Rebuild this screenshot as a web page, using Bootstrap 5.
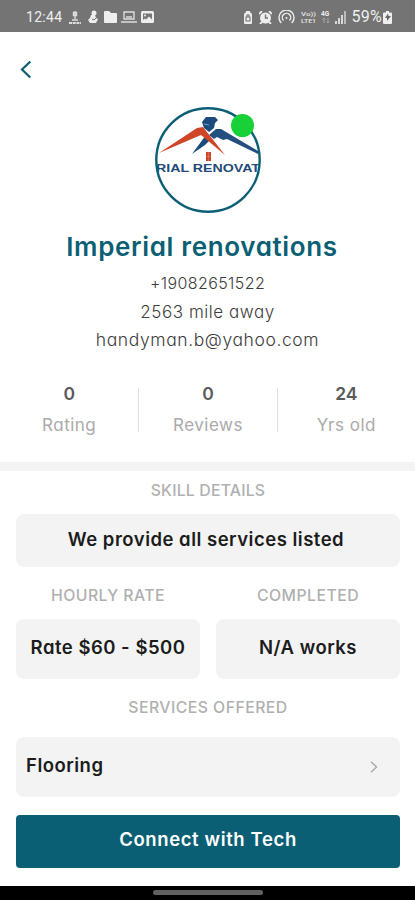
<!DOCTYPE html>
<html lang="en">
<head>
<meta charset="utf-8">
<meta name="viewport" content="width=device-width, initial-scale=1">
<title>Imperial renovations</title>
<link rel="stylesheet" href="https://cdn.jsdelivr.net/npm/bootstrap@5.3.0/dist/css/bootstrap.min.css">
<style>
:root{--teal:#0b5f74}
body{font-family:Inter,"Liberation Sans",sans-serif;font-feature-settings:"cv11","ss03";color:#1c1c1c;background:#fff;overflow:hidden;line-height:1}
.screen{width:415px;height:900px}
.statusbar{height:32px;background:#747474;color:#efefef;padding:2px 23px 0 26px}
.statusbar span{font-family:Roboto,sans-serif;font-size:14px}
.statusbar svg{display:block;flex:none}
.topbar{height:75px;padding:0 20px}
.avatar{width:106px;height:106px}
.online{left:76px;top:7px;width:23px;height:23px;background:#18d038}
.title{height:68px;font-size:26px;font-weight:600;color:var(--teal);padding-right:11px}
.title span{letter-spacing:.65px}
.contact{font-size:16px;font-weight:300;color:#3c3c3c;line-height:28.5px;margin-top:-12px}
.phone{letter-spacing:.4px}
.distance{font-size:17px;letter-spacing:.55px}
.email{font-size:17.5px;letter-spacing:.6px}
.stats{height:44px;margin-top:33px}
.stats>div{width:138.5px}
.stats>div+div{border-left:1px solid #dedede}
.num{font-size:17.5px;font-weight:600;color:#5a5a5a;line-height:12px}
.cap{font-size:17px;letter-spacing:.5px;color:#aaa;line-height:20px;margin-top:15px}
.band{height:9px;background:#f4f4f4;margin-top:30px}
.body-pane{padding:0 15px 0 16px}
.heading{font-size:15.8px;font-weight:500;letter-spacing:.45px;color:#b0b0b0}
.tile{background:#f3f3f3;border-radius:8px;font-size:18.5px;font-weight:600;letter-spacing:.5px}
.btn-connect{height:53px;margin-top:18px;background:var(--teal);color:#fff;font-size:18.5px;font-weight:600;letter-spacing:.62px;border-radius:4px;padding:0 0 2px;border:0}
.navstrip{height:14px;background:#000;padding-top:4px}
.navstrip div{width:110px;height:5px;background:#606060}
</style>
</head>
<body>
<main class="screen d-flex flex-column">
  <div class="statusbar d-flex align-items-center justify-content-between">
    <div class="d-flex align-items-center">
      <span style="letter-spacing:.3px">12:44</span>
      <svg style="margin-left:7px" width="12" height="15" viewBox="0 0 12 15" fill="none" stroke="#ddd"><path d="M6 1v8M4.500 2.500v3h3v-3zM3 10h6" stroke-width="1.400"/><path d="M0 13h12" stroke-width="2" stroke-dasharray="3 .7"/></svg>
      <svg style="margin-left:7px" width="10" height="14" viewBox="0 0 10 14" fill="#eee"><circle cx="6" cy="3" r="2.500"/><path d="M3 5h4l1 3 2 1-2 4H2L0 10l2-2z"/><path d="M4 9l2 1 2-2" stroke="#747474" fill="none"/></svg>
      <svg style="margin-left:6px" width="14" height="12" viewBox="0 0 14 12" fill="#eee"><path d="M1 0h4l2 2h5q1 0 1 1v8q0 1-1 1H1q-1 0-1-1V1q0-1 1-1"/></svg>
      <svg style="margin-left:3px" width="16" height="12" viewBox="0 0 16 12" fill="none" stroke="#ddd" stroke-width="1.400"><path d="M3 1h10v7H3zM0 11h16M5 6h6"/></svg>
      <svg class="ms-1" width="13" height="12" viewBox="0 0 13 12"><rect width="13" height="12" rx="1.500" fill="#eee"/><path d="M2 9V2.500h9v6L8 5.500l-3 3-1-1z" fill="#777"/><circle cx="4" cy="4.500" r="1" fill="#eee"/></svg>
    </div>
    <div class="d-flex align-items-center">
      <svg width="10" height="13" viewBox="0 0 10 13"><path d="M3 0h4v1l2 2v9q0 1-1 1H2q-1 0-1-1V3l2-2z" fill="#eee"/><path d="M3 6h4v4H3zM4 6V4h2v2" fill="none" stroke="#747474" stroke-width="1.100"/></svg>
      <svg style="margin-left:6px" width="13" height="13" viewBox="0 0 13 13"><circle cx="6.500" cy="7" r="5.500" fill="#eee"/><path d="M0 3l3-3M13 3l-3-3M3 11l-2 2M10 11l2 2" stroke="#eee" stroke-width="1.800"/><path d="M6.500 3.500V7H9" stroke="#747474" stroke-width="1.400" fill="none"/></svg>
      <svg style="margin-left:6px" width="17" height="14" viewBox="0 0 17 14" fill="none" stroke="#eee" stroke-width="1.400"><path d="M3.300 13a7.500 7.500 0 1 1 10.400 0M5.500 10.500a4.200 4.200 0 1 1 6 0"/><circle cx="8.500" cy="8" r="1" fill="#eee" stroke="none"/></svg>
      <svg style="margin-left:6px" width="15" height="16" viewBox="0 0 15 16" fill="#e6e6e6" font-family="Roboto" font-size="6" font-weight="500"><text y="6.500" textLength="15" lengthAdjust="spacingAndGlyphs">Vo))</text><text y="14" textLength="15" lengthAdjust="spacingAndGlyphs">LTE1</text></svg>
      <svg style="margin-left:5px" width="10" height="14" viewBox="0 0 10 14"><text y="6" x="0" font-family="Roboto" font-size="6.500" font-weight="700" fill="#eee">4G</text><path d="M3 13V8M1.500 9.500L3 8l1.500 1.500M7 8v5M5.500 11.500L7 13l1.500-1.500" stroke="#a5a5a5" fill="none"/></svg>
      <svg style="margin-left:4px" width="11" height="13" viewBox="0 0 11 13" fill="#d8d8d8"><path d="M0 10h2v3H0zM3 7h2v6H3zM6 4h2v9H6z"/><path d="M9 0h2v13H9z" fill="#bbb"/></svg>
      <span style="margin-left:5px;font-size:16px;letter-spacing:.3px">59%</span>
      <svg style="margin-left:1px" width="9" height="13" viewBox="0 0 9 13"><path d="M3 0h3v1.500h2q1 0 1 1V12q0 1-1 1H1q-1 0-1-1V2.500q0-1 1-1h2z" fill="#eee"/><path d="M5 2.500L2 7h2v3l4-5H5.500z" fill="#666"/></svg>
    </div>
  </div>
  <header class="topbar d-flex align-items-center">
    <svg width="12" height="19" viewBox="0 0 12 19" fill="none" stroke="#0b5f74" stroke-width="2.200"><path d="M10.300 1.500L2 9.500l8.300 8"/></svg>
  </header>
  <div class="avatar position-relative mx-auto">
    <svg width="106" height="106" viewBox="0 0 106 106">
      <defs><clipPath id="disc"><circle cx="53" cy="53" r="51"/></clipPath></defs>
      <g clip-path="url(#disc)">
        <path d="M37 47L51 28l5 4-6 6z" fill="#1b4b7c"/>
        <path d="M54 28l7-6 5 0 37 22v3L72 32l-4 1-6-3-3 2z" fill="#24507f"/>
        <path d="M4 46L42 21l6-1 22 28L46 28z" fill="#cf4527"/>
        <path d="M47 15l4-5 9 0 3 3-3 3-1 5-5 4-5-4z" fill="#1b4b7c"/>
        <path d="M49 17l5 1" stroke="#7d9ab8" stroke-width="1"/>
        <path d="M51 45h5v9h-5z" fill="#cf4527"/><path d="M51 49.500h5M53.500 45v9" stroke="#e08c76" stroke-width=".5"/>
        <text x="1" y="65" textLength="104" lengthAdjust="spacingAndGlyphs" font-family="Liberation Sans" font-weight="700" font-size="10.500" fill="#234a78">RIAL RENOVAT</text>
      </g>
      <circle cx="53" cy="53" r="51.700" fill="none" stroke="#0b5f74" stroke-width="2.400"/>
    </svg>
    <i class="online position-absolute rounded-circle"></i>
  </div>
  <h1 class="title d-flex align-items-center justify-content-center m-0"><span>Imperial renovations</span></h1>
  <div class="contact text-center">
    <div class="phone">+19082651522</div><div class="distance">2563 mile away</div><div class="email">handyman.b@yahoo.com</div>
  </div>
  <section class="stats d-flex text-center">
    <div><div class="num">0</div><div class="cap">Rating</div></div>
    <div><div class="num">0</div><div class="cap">Reviews</div></div>
    <div><div class="num">24</div><div class="cap">Yrs old</div></div>
  </section>
  <div class="band"></div>
  <section class="body-pane d-flex flex-column">
    <div class="heading d-flex align-items-center justify-content-center" style="height:43px;padding-bottom:2px"><span style="letter-spacing:.2px">SKILL DETAILS</span></div>
    <div class="tile d-flex align-items-center justify-content-center" style="height:53px;padding:0 4px 2px 0"><span>We provide all services listed</span></div>
    <div class="row gx-3 text-center">
      <div class="col-6">
        <div class="heading d-flex align-items-center justify-content-center" style="height:52px;padding-top:6px"><span>HOURLY RATE</span></div>
        <div class="tile d-flex align-items-center justify-content-center" style="height:60px;padding-bottom:2px"><span>Rate $60 - $500</span></div>
      </div>
      <div class="col-6">
        <div class="heading d-flex align-items-center justify-content-center" style="height:52px;padding-top:6px"><span>COMPLETED</span></div>
        <div class="tile d-flex align-items-center justify-content-center" style="height:60px;padding-bottom:2px"><span>N/A works</span></div>
      </div>
    </div>
    <div class="heading d-flex align-items-center justify-content-center" style="height:58px"><span>SERVICES OFFERED</span></div>
    <div class="tile d-flex align-items-center justify-content-between" style="height:60px;padding:0 22px 2px 10px"><span>Flooring</span>
      <svg style="margin-top:2px" width="8" height="12" viewBox="0 0 8 12" fill="none" stroke="#aaa" stroke-width="1.500"><path d="M1 .7L6.500 6 1 11.300"/></svg>
    </div>
    <button class="btn btn-connect w-100" type="button">Connect with Tech</button>
  </section>
  <footer class="navstrip mt-auto"><div class="mx-auto rounded-pill"></div></footer>
</main>
<script src="https://cdn.jsdelivr.net/npm/bootstrap@5.3.0/dist/js/bootstrap.bundle.min.js"></script>
</body>
</html>
